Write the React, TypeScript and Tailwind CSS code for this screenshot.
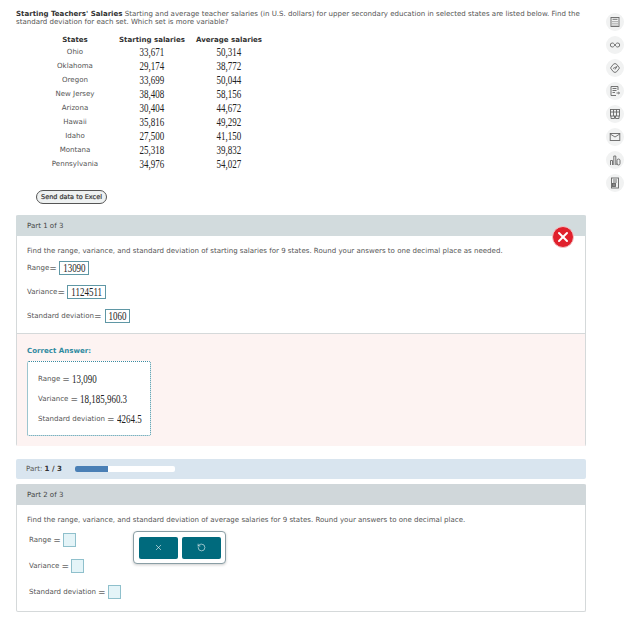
import React from "react";
import { X, RotateCcw } from "lucide-react";

const rows = [
  ["Ohio", "33,671", "50,314"],
  ["Oklahoma", "29,174", "38,772"],
  ["Oregon", "33,699", "50,044"],
  ["New Jersey", "38,408", "58,156"],
  ["Arizona", "30,404", "44,672"],
  ["Hawaii", "35,816", "49,292"],
  ["Idaho", "27,500", "41,150"],
  ["Montana", "25,318", "39,832"],
  ["Pennsylvania", "34,976", "54,027"],
];

function Num({ v, left }: { v: string; left?: boolean }) {
  return (
    <span className={`inline-block scale-x-[0.78] whitespace-nowrap font-['Liberation_Serif',serif] text-[11.5px] leading-[12px] text-[#222] ${left ? "origin-left" : "origin-center"}`}>
      {v}
    </span>
  );
}

function Ans({ v, w }: { v: string; w: string }) {
  return (
    <span className={`flex h-[14px] items-center justify-center border border-[#5f97a5] ${w}`}>
      <Num v={v} />
    </span>
  );
}

function Eq() {
  return <span className="text-[9px] leading-[10px] text-[#222]">=</span>;
}

function Blank() {
  return <span className="ml-[2px] inline-block h-[14px] w-[13px] border border-[#8fc0cc] bg-[#e4f4f8]" />;
}

function SideIcon({ children }: { children: React.ReactNode }) {
  return (
    <div className="flex h-[18px] w-[18px] items-center justify-center rounded-full bg-[#f1f2f2]">
      <svg width="12" height="12" viewBox="0 0 12 12" fill="none" stroke="#666" strokeWidth="0.9">
        {children}
      </svg>
    </div>
  );
}

export default function App() {
  return (
    <div className="relative flex h-[627px] w-[625px] overflow-hidden bg-white font-['DejaVu_Sans',sans-serif] text-[7.05px] leading-[8px] text-[#555]">
      <main className="ml-[16px] w-[570px] shrink-0 pt-[10px]">
        <p className="w-[566px]">
          <b className="font-bold text-[#333]">Starting Teachers' Salaries</b> Starting and average teacher salaries (in U.S. dollars) for upper secondary education in selected states are listed below. Find the standard deviation for each set. Which set is more variable?
        </p>
        <table className="ml-[30px] mt-[9px] w-[222px] table-fixed border-collapse">
          <thead>
            <tr className="h-[10px] font-bold text-[#333]">
              <th className="w-[58px] p-0 font-bold">States</th>
              <th className="w-[86px] whitespace-nowrap p-0 pl-[10px] font-bold">Starting salaries</th>
              <th className="w-[78px] whitespace-nowrap p-0 font-bold">Average salaries</th>
            </tr>
          </thead>
          <tbody>
            {rows.map((r) => (
              <tr key={r[0]} className="h-[14px] text-center">
                <td className="whitespace-nowrap p-0">{r[0]}</td>
                <td className="p-0 pl-[10px]"><Num v={r[1]} /></td>
                <td className="p-0"><Num v={r[2]} /></td>
              </tr>
            ))}
          </tbody>
        </table>
        <button className="ml-[20px] mt-[19px] block h-[14px] w-[71px] whitespace-nowrap rounded-full border border-[#555] bg-[#eef1f1] text-[6.5px] leading-[12px] text-[#333] [-webkit-text-stroke:0.2px_#333]">
          Send data to Excel
        </button>

        <section className="relative mt-[11px] h-[231px] rounded-[2px] border-x border-b border-[#d5d9da]">
          <header className="-mx-px flex h-[21px] items-center rounded-t-[2px] bg-[#d2dbdd] pl-[11px] text-[#444]">Part 1 of 3</header>
          <div className="h-[97px] pl-[10px] pt-[11px]">
            <p>Find the range, variance, and standard deviation of starting salaries for 9 states. Round your answers to one decimal place as needed.</p>
            <div className="mt-[6px] flex h-[14px] items-center">Range<Eq /><Ans v="13090" w="ml-[2px] w-[30px]" /></div>
            <div className="mt-[10px] flex h-[14px] items-center">Variance<Eq /><Ans v="1124511" w="ml-[2px] w-[39px]" /></div>
            <div className="mt-[10px] flex h-[14px] items-center">Standard deviation<Eq /><Ans v="1060" w="ml-[3px] w-[25px]" /></div>
          </div>
          <div className="h-[113px] border-t border-[#d5d9da] bg-[#fdf3f2] pl-[10px] pt-[13px]">
            <p className="font-bold text-[#2f8aa0]">Correct Answer:</p>
            <div className="mt-[6px] flex h-[75px] w-[124px] flex-col justify-center gap-[10px] rounded-[2px] border border-dotted border-[#3a8ba0] bg-white pl-[10px]">
              <div className="flex h-[10px] items-center gap-[2px] whitespace-nowrap">Range <Eq /><Num left v="13,090" /></div>
              <div className="flex h-[10px] items-center gap-[2px] whitespace-nowrap">Variance <Eq /><Num left v="18,185,960.3" /></div>
              <div className="flex h-[10px] items-center gap-[2px] whitespace-nowrap">Standard deviation <Eq /><Num left v="4264.5" /></div>
            </div>
          </div>
          <div className="absolute right-[11px] top-[11px] flex h-[22px] w-[22px] items-center justify-center rounded-full border border-[#f3c3c6] bg-[#e0202c]">
            <X size={16} strokeWidth={3} color="#fff" />
          </div>
        </section>

        <div className="mt-[13px] flex h-[20px] items-center rounded-[2px] bg-[#d9e5ef] pl-[10px]">
          <span className="w-[49px]">Part: <b className="text-[#333]">1 / 3</b></span>
          <div className="h-[6px] w-[100px] rounded-[2px] bg-white">
            <div className="h-full w-[33px] rounded-l-[2px] bg-[#4a7fb5]" />
          </div>
        </div>

        <section className="relative mt-[5px] h-[128px] rounded-[2px] border-x border-b border-[#d5d9da]">
          <header className="-mx-px flex h-[21px] items-center rounded-t-[2px] bg-[#d0d7da] pl-[11px] text-[#444]">Part 2 of 3</header>
          <div className="pl-[10px] pt-[11px]">
            <p>Find the range, variance, and standard deviation of average salaries for 9 states. Round your answers to one decimal place.</p>
            <div className="ml-[2px] mt-[9px] flex h-[14px] items-center">Range <span className="ml-[2px]"><Eq /></span><Blank /></div>
            <div className="ml-[2px] mt-[12px] flex h-[14px] items-center">Variance <span className="ml-[2px]"><Eq /></span><Blank /></div>
            <div className="ml-[2px] mt-[12px] flex h-[14px] items-center">Standard deviation <span className="ml-[2px]"><Eq /></span><Blank /></div>
          </div>
          <div className="absolute left-[116px] top-[47px] flex h-[33px] w-[93px] items-center justify-center gap-[4px] rounded-[4px] border border-[#8a9ea5] bg-white shadow-[0_1px_3px_rgba(0,0,0,0.2)]">
            <div className="flex h-[22px] w-[39px] items-center justify-center rounded-[2px] bg-[#006a7d]"><X size={9} color="#fff" strokeWidth={1.5} /></div>
            <div className="flex h-[22px] w-[39px] items-center justify-center rounded-[2px] bg-[#006a7d]"><RotateCcw size={9} color="#fff" strokeWidth={1.5} /></div>
          </div>
        </section>
      </main>

      <aside className="ml-[20px] flex flex-col gap-[5px] pt-[13px]">
        <SideIcon><rect x="2" y="1.5" width="8" height="9" /><path d="M3.5 3.3h5M3.5 5.5h1M5.5 5.5h1M7.5 5.5h1M3.5 7.3h1M5.5 7.3h1M7.5 7.3h1M3.5 9.1h1M5.5 9.1h1M7.5 9.1h1" /></SideIcon>
        <SideIcon><path d="M6 6C5 4.5 4.3 4 3.3 4a2 2 0 0 0 0 4C4.3 8 5 7.5 6 6c1-1.500 1.700-2 2.700-2a2 2 0 0 1 0 4C7.700 8 7 7.500 6 6Z" /></SideIcon>
        <SideIcon><path d="M6 1.5 7.8 2.400 10.500 6 7.800 9.600 6 10.500 4.200 9.600 1.500 6 4.200 2.400Z" strokeLinejoin="round" /><path d="M4 6.500 8 4.500 6 7.500" /></SideIcon>
        <SideIcon><path d="M9 5V1.500H2v9h5" /><path d="M3.500 3.500h4M3.500 5.500h4M3.500 7.500h2.500M7.500 8h3M9.300 7l1.200 1-1.200 1" /></SideIcon>
        <SideIcon><rect x="1.500" y="1.500" width="9" height="6.500" /><path d="M4.500 1.500V8M7.500 1.500V8M1.500 4h9M2 8v2.500h3.500V8M6.500 8v2.500h3.500V8" /></SideIcon>
        <SideIcon><rect x="1.200" y="2.500" width="9.600" height="7" /><path d="m1.200 3 4.800 3 4.800-3" /></SideIcon>
        <SideIcon><path d="M1.500 11V6.500h2V11M4.800 11V2h2v9M8 11V6.500a1.500 1.500 0 0 1 3 0V9.500a1.500 1.500 0 0 1-3 0" /></SideIcon>
        <SideIcon><rect x="2.500" y="1" width="7" height="10" /><path d="M4 3h4M4 5h4" /><rect x="3.500" y="6.500" width="3" height="3" fill="#888" /></SideIcon>
      </aside>
    </div>
  );
}
